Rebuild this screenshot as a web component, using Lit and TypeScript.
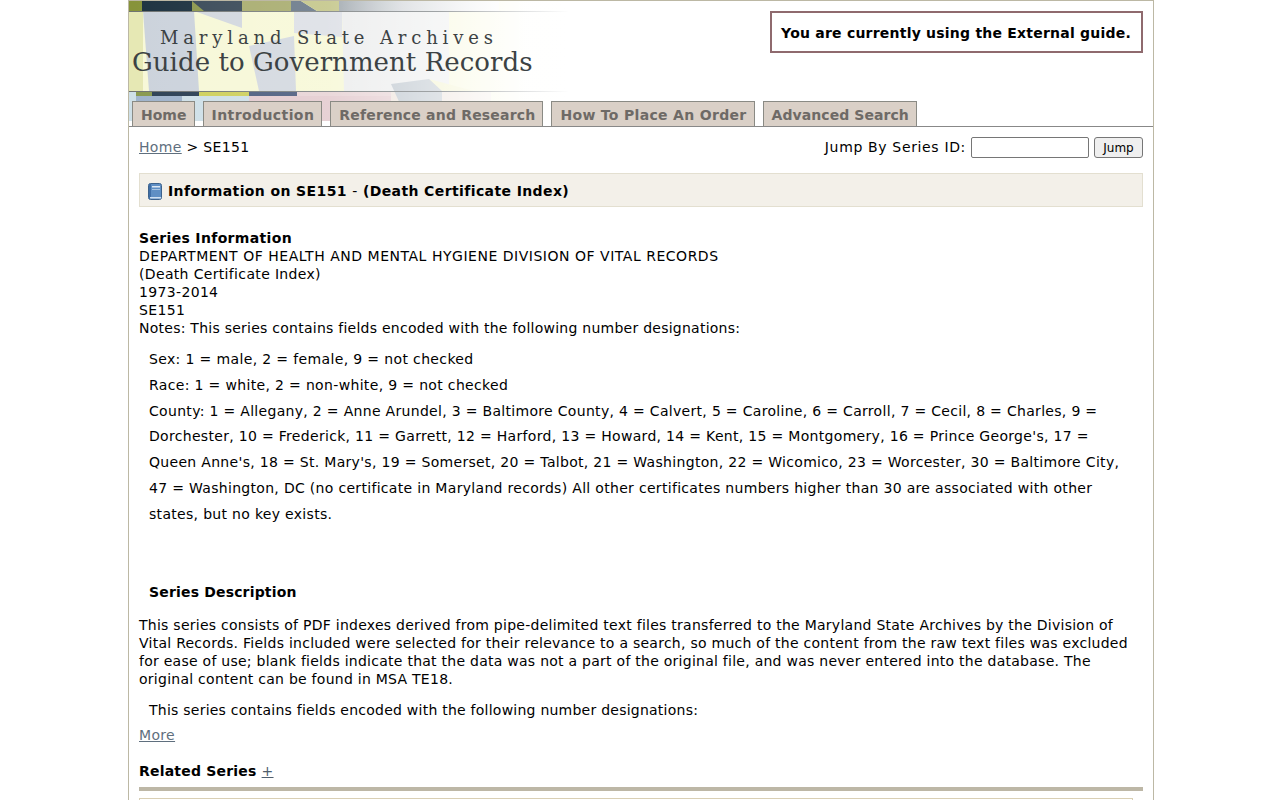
import { LitElement, html, css, svg } from "lit";
import { customElement } from "lit/decorators.js";

@customElement("app-root")
export class AppRoot extends LitElement {
  static styles = css`
    :host { display: block; height: 800px; overflow: hidden; background: #fff; font-family: "DejaVu Sans", Verdana, sans-serif; font-size: 14px; line-height: 18px; color: #000; letter-spacing: 0.34px; }
    .wrap { width: 1024px; margin: 0 0 0 128px; border: 1px solid #bcb8a4; border-bottom: 0; min-height: 800px; }
    .banner { position: relative; height: 99px; }
    .flag { position: absolute; left: 0; top: 0; width: 440px; height: 120px; }
    .titles { position: relative; padding-top: 27px; font-family: "DejaVu Serif", Georgia, serif; color: #3c4244; }
    .t1 { font-size: 18px; line-height: 20px; letter-spacing: 4.85px; padding-left: 31px; }
    .t2 { font-size: 26px; line-height: 28px; letter-spacing: 0.05px; padding-left: 3px; }
    .notice { position: absolute; right: 10px; top: 10px; border: 2px solid #8f6a6e; padding: 11px 10px 9px 9px; font-weight: 700; font-size: 14px; letter-spacing: 0.22px; background: #fff; white-space: nowrap; }
    .tabs { position: relative; display: flex; gap: 8px; padding-left: 3px; height: 26px; align-items: flex-end; border-bottom: 1px solid #888; }
    .tab { background: #dad0c7; border: 1px solid #8a8a84; border-bottom: 0; padding: 0 7px 0 8px; height: 24px; line-height: 26px; color: #6e6a66; font-weight: 700; font-size: 14px; white-space: nowrap; }
    .tab:nth-child(1) { letter-spacing: 0.02px; }
    .tab:nth-child(2) { letter-spacing: 0.42px; }
    .tab:nth-child(3) { letter-spacing: 0.19px; }
    .tab:nth-child(4) { letter-spacing: 0.32px; }
    .tab:nth-child(5) { letter-spacing: 0.07px; }
    .content { padding: 0 10px; }
    .topline { display: flex; justify-content: space-between; align-items: center; height: 39px; }
    a { color: #5f6f7e; text-decoration: underline; }
    .jump { display: flex; align-items: center; gap: 5px; letter-spacing: 0.65px; }
    .jump input { width: 116px; height: 19px; margin-top: 2px; padding: 0; box-sizing: content-box; border: 1px solid #767676; border-radius: 2px; }
    .jump button { height: 21px; width: 49px; margin-top: 2px; padding: 0; font: 12px "DejaVu Sans", sans-serif; background: #efefef; border: 1px solid #767676; border-radius: 3px; color: #000; }
    .head { display: flex; align-items: center; gap: 6px; height: 30px; padding-top: 2px; margin-top: 7px; padding-left: 8px; background: #f3f0e9; border: 1px solid #e3dfd0; font-weight: 700; font-size: 14px; letter-spacing: 0.39px; }
    .dash { font-weight: 400; }
    .info { margin-top: 22px; }
    .info b { font-weight: 700; }
    .caps { letter-spacing: 0.52px; }
    .noteline { letter-spacing: 0.25px; }
    .notes { margin: 10px 0 0 10px; line-height: 25.8px; }
    .notes p { margin: 0; }
    .notes .county { letter-spacing: 0.31px; }
    .notes .short { letter-spacing: 0.36px; }
    .desc-h { margin: 51px 0 0 10px; font-weight: 700; letter-spacing: 0.17px; line-height: 26px; }
    .desc { margin: 11px 0 0; letter-spacing: 0.26px; }
    .enc { margin: 13px 0 0 10px; letter-spacing: 0.24px; }
    .more { margin-top: 7px; display: block; }
    .related { margin-top: 18px; font-weight: 700; letter-spacing: 0.2px; }
    .related a { font-weight: 400; color: #4f5f6e; }
    .rule { height: 4px; background: #bdb7a6; margin-top: 7px; }
    .sub { height: 20px; margin: 7px 10px 0 0; border: 1px solid #d9cfb4; border-bottom: 0; }
  `;

  render() {
    return html`<div class="wrap">
      <div class="banner">
        <svg class="flag" viewBox="0 0 440 120" preserveAspectRatio="none">
          <defs>
            <linearGradient id="f" x1="0" x2="1" y1="0" y2="0">
              <stop offset="0" stop-color="#fff" stop-opacity="0"></stop>
              <stop offset="0.45" stop-color="#fff" stop-opacity="0.1"></stop>
              <stop offset="0.72" stop-color="#fff" stop-opacity="0.55"></stop>
              <stop offset="0.9" stop-color="#fff" stop-opacity="0.97"></stop>
              <stop offset="1" stop-color="#fff"></stop>
            </linearGradient>
            <linearGradient id="l" x1="0" x2="1" y1="0" y2="0">
              <stop offset="0" stop-color="#6f7371"></stop>
              <stop offset="0.7" stop-color="#9fa3a5"></stop>
              <stop offset="1" stop-color="#fff"></stop>
            </linearGradient>
            <linearGradient id="t" x1="0" x2="1" y1="0" y2="0">
              <stop offset="0" stop-color="#a0a8ae"></stop>
              <stop offset="0.4" stop-color="#cfd3d7"></stop>
              <stop offset="1" stop-color="#f4f5f6"></stop>
            </linearGradient>
            <filter id="s" x="0" y="0" width="1" height="1"><feGaussianBlur stdDeviation="0.6"></feGaussianBlur></filter>
          </defs>
          ${svg`
          <g filter="url(#s)">
          <rect width="440" height="120" fill="#f7f8d8"></rect>
          <rect x="0" y="10" width="14" height="80" fill="#e6e8b4"></rect>
          <polygon points="14,10 65,10 70,90 20,90" fill="#ccd3dc"></polygon>
          <polygon points="65,10 113,10 113,27" fill="#d3d8df"></polygon>
          <polygon points="120,45 165,35 167,90 130,90" fill="#d4d9e0"></polygon>
          <polygon points="165,10 213,10 213,36 165,32" fill="#dde0e6"></polygon>
          <polygon points="213,10 320,10 320,90 215,90" fill="#eceded"></polygon>
          <polygon points="300,78 345,90 345,120 313,100" fill="#f3f3cc"></polygon>
          <rect x="0" y="91" width="120" height="29" fill="#cfe0e8"></rect>
          <rect x="7" y="95" width="46" height="25" fill="#a0b4cc"></rect>
          <rect x="120" y="95" width="142" height="25" fill="#e4ccd0"></rect>
          <rect x="168" y="91" width="94" height="4" fill="#e8d4d6"></rect>
          <rect x="262" y="91" width="100" height="29" fill="#eee4dc"></rect>
          <polygon points="262,83 300,78 313,90 313,105 272,105" fill="#bcc5cd"></polygon>
          </g>

          <rect x="0" y="0" width="13" height="10" fill="#87933a"></rect>
          <rect x="13" y="0" width="50" height="10" fill="#1f3442"></rect>
          <rect x="63" y="0" width="12" height="10" fill="#8f9a50"></rect>
          <polygon points="63,0 113,0 113,10 75,10" fill="#3c4c5a"></polygon>
          <rect x="113" y="0" width="50" height="10" fill="#a9ad70"></rect>
          <polygon points="162,0 172,0 188,10 162,10" fill="#6b7a8a"></polygon>
          <polygon points="172,0 210,0 210,10 188,10" fill="#c4c68a"></polygon>
          <rect x="210" y="0" width="160" height="10" fill="url(#t)"></rect>

          <rect x="7" y="91" width="16" height="4" fill="#8a9a50"></rect>
          <rect x="23" y="91" width="47" height="4" fill="#2e4256"></rect>
          <rect x="70" y="91" width="50" height="4" fill="#cfd05e"></rect>
          <rect x="120" y="91" width="48" height="4" fill="#4f5f80"></rect>

          <rect width="440" height="120" fill="url(#f)"></rect>
          <rect y="10" width="440" height="1" fill="url(#l)"></rect>
          <rect y="90" width="440" height="1" fill="url(#l)"></rect>
          `}
        </svg>
        <div class="titles">
          <div class="t1">Maryland State Archives</div>
          <div class="t2">Guide to Government Records</div>
        </div>
        <div class="notice">You are currently using the External guide.</div>
      </div>
      <nav class="tabs">
        <div class="tab">Home</div>
        <div class="tab">Introduction</div>
        <div class="tab">Reference and Research</div>
        <div class="tab">How To Place An Order</div>
        <div class="tab">Advanced Search</div>
      </nav>
      <div class="content">
        <div class="topline">
          <div><a href="#">Home</a> &gt; SE151</div>
          <div class="jump">Jump By Series ID: <input /><button>Jump</button></div>
        </div>
        <div class="head">
          <svg width="14" height="17" viewBox="0 0 14 17">
            <rect x="0.5" y="0.5" width="13" height="16" rx="2" fill="#5f8fc4" stroke="#3d628c"></rect>
            <rect x="1" y="1" width="2" height="15" fill="#3f6ea6"></rect>
            <rect x="4" y="3" width="8" height="1.5" fill="#dce8f4"></rect>
            <rect x="4" y="6" width="8" height="1" fill="#a9c5e2"></rect>
            <rect x="2" y="14" width="11" height="1.5" fill="#cfe0f0"></rect>
          </svg>
          <span>Information on SE151 <span class="dash">-</span> (Death Certificate Index)</span>
        </div>
        <div class="info">
          <b>Series Information</b><br />
          <span class="caps">DEPARTMENT OF HEALTH AND MENTAL HYGIENE DIVISION OF VITAL RECORDS</span><br />
          (Death Certificate Index)<br />
          1973-2014<br />
          SE151<br />
          <span class="noteline">Notes: This series contains fields encoded with the following number designations:</span>
        </div>
        <div class="notes">
          <p class="short">Sex: 1 = male, 2 = female, 9 = not checked</p>
          <p>Race: 1 = white, 2 = non-white, 9 = not checked</p>
          <p class="county">County: 1 = Allegany, 2 = Anne Arundel, 3 = Baltimore County, 4 = Calvert, 5 = Caroline, 6 = Carroll, 7 = Cecil, 8 = Charles, 9 =<br />Dorchester, 10 = Frederick, 11 = Garrett, 12 = Harford, 13 = Howard, 14 = Kent, 15 = Montgomery, 16 = Prince George's, 17 =<br />Queen Anne's, 18 = St. Mary's, 19 = Somerset, 20 = Talbot, 21 = Washington, 22 = Wicomico, 23 = Worcester, 30 = Baltimore City,<br />47 = Washington, DC (no certificate in Maryland records) All other certificates numbers higher than 30 are associated with other<br />states, but no key exists.</p>
        </div>
        <div class="desc-h">Series Description</div>
        <div class="desc">This series consists of PDF indexes derived from pipe-delimited text files transferred to the Maryland State Archives by the Division of<br />Vital Records. Fields included were selected for their relevance to a search, so much of the content from the raw text files was excluded<br />for ease of use; blank fields indicate that the data was not a part of the original file, and was never entered into the database. The<br />original content can be found in MSA TE18.</div>
        <div class="enc">This series contains fields encoded with the following number designations:</div>
        <a class="more" href="#">More</a>
        <div class="related">Related Series <a href="#">+</a></div>
        <div class="rule"></div>
        <div class="sub"></div>
      </div>
    </div>`;
  }
}
